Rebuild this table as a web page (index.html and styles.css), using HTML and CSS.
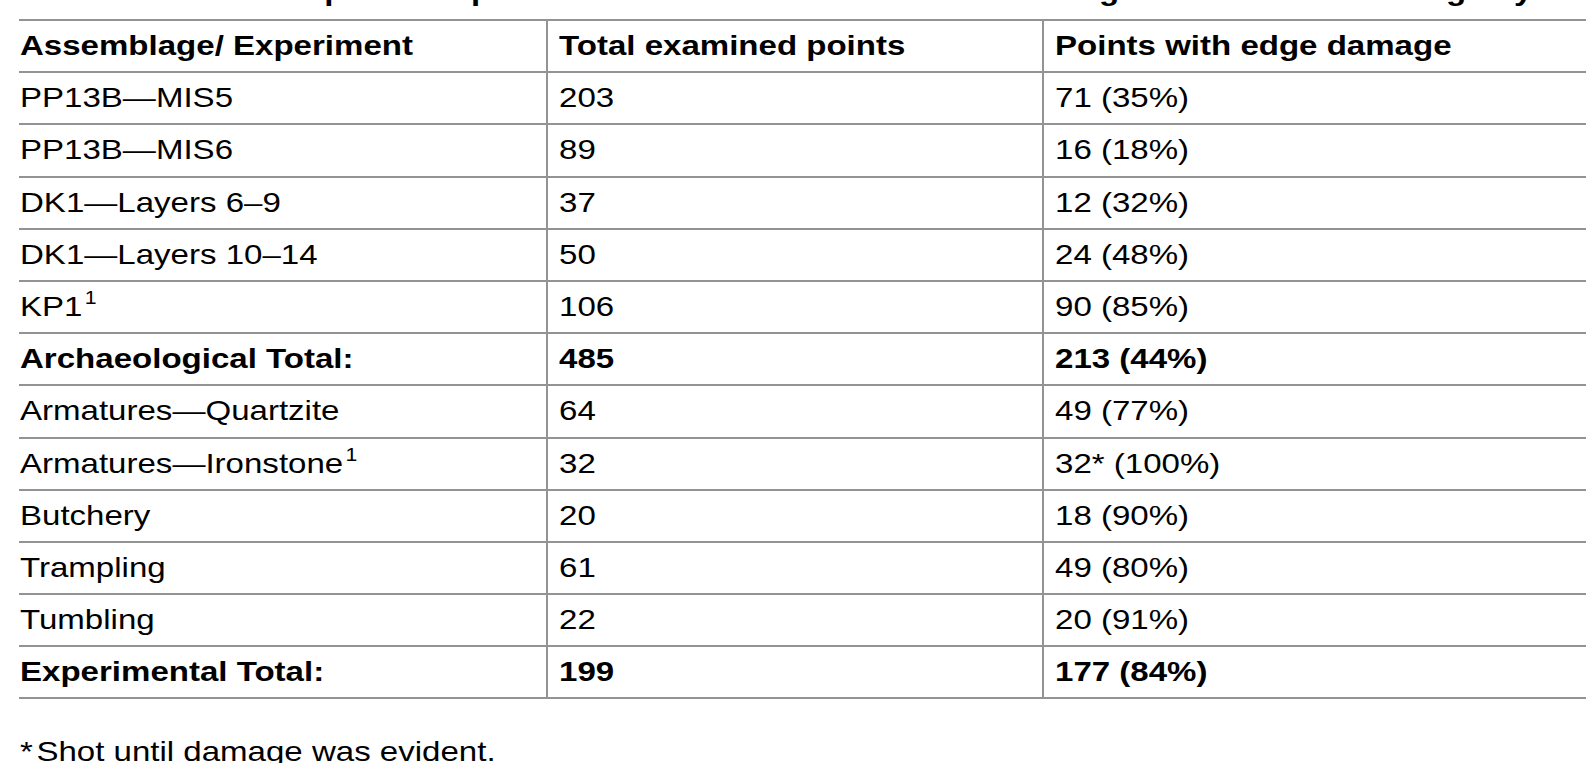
FILE: index.html
```html
<!DOCTYPE html>
<html lang="en">
<head>
<meta charset="utf-8">
<title>Table</title>
<link rel="stylesheet" href="styles.css">
</head>
<body>
<div class="page">
  <div class="caption"><span class="t">Table 2. Number of points in present and in all earlier studies with edge scars for assemblage by site and experiment.</span></div>
  <table class="data">
    <colgroup>
      <col class="c1"><col class="c2"><col class="c3">
    </colgroup>
    <thead>
      <tr><th><span class="t">Assemblage/ Experiment</span></th><th><span class="t">Total examined points</span></th><th><span class="t">Points with edge damage</span></th></tr>
    </thead>
    <tbody>
      <tr><td><span class="t">PP13B—MIS5</span></td><td><span class="t">203</span></td><td><span class="t">71 (35%)</span></td></tr>
      <tr><td><span class="t">PP13B—MIS6</span></td><td><span class="t">89</span></td><td><span class="t">16 (18%)</span></td></tr>
      <tr><td><span class="t">DK1—Layers 6–9</span></td><td><span class="t">37</span></td><td><span class="t">12 (32%)</span></td></tr>
      <tr><td><span class="t">DK1—Layers 10–14</span></td><td><span class="t">50</span></td><td><span class="t">24 (48%)</span></td></tr>
      <tr><td><span class="t">KP1<sup>1</sup></span></td><td><span class="t">106</span></td><td><span class="t">90 (85%)</span></td></tr>
      <tr class="total"><td><span class="t">Archaeological Total:</span></td><td><span class="t">485</span></td><td><span class="t">213 (44%)</span></td></tr>
      <tr><td><span class="t">Armatures—Quartzite</span></td><td><span class="t">64</span></td><td><span class="t">49 (77%)</span></td></tr>
      <tr><td><span class="t">Armatures—Ironstone<sup>1</sup></span></td><td><span class="t">32</span></td><td><span class="t">32* (100%)</span></td></tr>
      <tr><td><span class="t">Butchery</span></td><td><span class="t">20</span></td><td><span class="t">18 (90%)</span></td></tr>
      <tr><td><span class="t">Trampling</span></td><td><span class="t">61</span></td><td><span class="t">49 (80%)</span></td></tr>
      <tr><td><span class="t">Tumbling</span></td><td><span class="t">22</span></td><td><span class="t">20 (91%)</span></td></tr>
      <tr class="total"><td><span class="t">Experimental Total:</span></td><td><span class="t">199</span></td><td><span class="t">177 (84%)</span></td></tr>
    </tbody>
  </table>
  <p class="note"><span class="t"><span class="ast">*</span>Shot until damage was evident.</span></p>
</div>
</body>
</html>
```

FILE: styles.css
```css
html, body {
  margin: 0;
  padding: 0;
  background: #ffffff;
  overflow: hidden;
}

body {
  font-family: "Liberation Sans", Arial, Helvetica, sans-serif;
  color: #000000;
  font-size: 28px;
}

.page {
  padding-left: 19px;
}

/* The source table is rendered horizontally stretched */
.t {
  display: inline-block;
  transform: scaleX(1.18);
  transform-origin: 0 50%;
  white-space: nowrap;
}

.caption {
  font-weight: bold;
  font-size: 28px;
  line-height: 32px;
  height: 32px;
  margin-top: -25px;
  margin-bottom: 12px;
  padding-left: 1px;
  white-space: nowrap;
  overflow: hidden;
}

.data {
  border-collapse: collapse;
  width: 100%;
  table-layout: fixed;
}

.c1 { width: 528px; }
.c2 { width: 496px; }
.c3 { width: auto; }

.data th,
.data td {
  border-top: 2px solid #939393;
  border-bottom: 2px solid #939393;
  height: 50.2px;
  padding: 0 0 0 11px;
  text-align: left;
  vertical-align: middle;
  line-height: 32px;
  white-space: nowrap;
}

.data th:first-child,
.data td:first-child {
  padding-left: 1px;
}

.data th:not(:last-child),
.data td:not(:last-child) {
  border-right: 2px solid #939393;
}

.data th {
  font-weight: bold;
}

.data tr.total td {
  font-weight: bold;
}

.data sup {
  font-size: 18px;
  line-height: 0;
  vertical-align: 12px;
  margin-left: 2px;
}

.note {
  margin: 37px 0 0 0;
  padding-left: 1px;
  line-height: 32px;
  font-size: 28px;
}

.ast {
  margin-right: 3px;
}
```
